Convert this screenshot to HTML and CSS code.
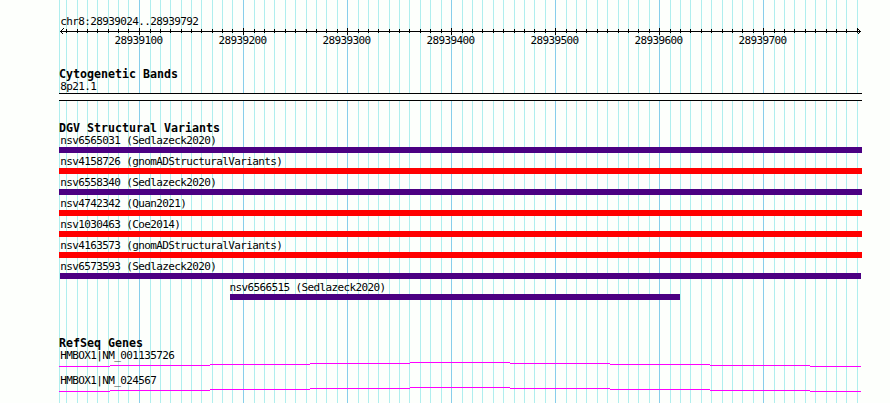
FILE: index.html
```html
<!DOCTYPE html>
<html lang="en">
<head>
<meta charset="utf-8">
<title>chr8:28939024..28939792</title>
<link rel="stylesheet" href="styles.css">
</head>
<body>
<svg class="grid" width="890" height="403" aria-hidden="true">
<path class="minor" d="M59 0v403M66 0v403M77 0v403M87 0v403M97 0v403M108 0v403M118 0v403M128 0v403M150 0v403M160 0v403M170 0v403M181 0v403M191 0v403M201 0v403M212 0v403M222 0v403M232 0v403M254 0v403M264 0v403M274 0v403M285 0v403M295 0v403M306 0v403M316 0v403M326 0v403M337 0v403M358 0v403M368 0v403M378 0v403M389 0v403M399 0v403M409 0v403M420 0v403M430 0v403M441 0v403M462 0v403M472 0v403M482 0v403M493 0v403M503 0v403M514 0v403M524 0v403M534 0v403M545 0v403M566 0v403M576 0v403M586 0v403M597 0v403M607 0v403M618 0v403M628 0v403M638 0v403M649 0v403M670 0v403M680 0v403M690 0v403M701 0v403M711 0v403M722 0v403M732 0v403M742 0v403M753 0v403M774 0v403M784 0v403M794 0v403M805 0v403M815 0v403M826 0v403M836 0v403M846 0v403M857 0v403" transform="translate(.5 0)"/>
<path class="major" d="M139 0v403M243 0v403M347 0v403M451 0v403M555 0v403M659 0v403M763 0v403" transform="translate(.5 0)"/>
</svg>
<main class="browser">
<section class="ruler">
<p class="label">chr8:28939024..28939792</p>
<svg class="axis" width="803" height="9" viewBox="59 27 803 9" aria-hidden="true">
<path d="M60 31.5H861"/>
<path transform="translate(.5 0)" d="M66 29v4M77 29v4M87 29v4M97 29v4M108 29v4M118 29v4M128 29v4M150 29v4M160 29v4M170 29v4M181 29v4M191 29v4M201 29v4M212 29v4M222 29v4M232 29v4M254 29v4M264 29v4M274 29v4M285 29v4M295 29v4M306 29v4M316 29v4M326 29v4M337 29v4M358 29v4M368 29v4M378 29v4M389 29v4M399 29v4M409 29v4M420 29v4M430 29v4M441 29v4M462 29v4M472 29v4M482 29v4M493 29v4M503 29v4M514 29v4M524 29v4M534 29v4M545 29v4M566 29v4M576 29v4M586 29v4M597 29v4M607 29v4M618 29v4M628 29v4M638 29v4M649 29v4M670 29v4M680 29v4M690 29v4M701 29v4M711 29v4M722 29v4M732 29v4M742 29v4M753 29v4M774 29v4M784 29v4M794 29v4M805 29v4M815 29v4M826 29v4M836 29v4M846 29v4M857 29v4M139 28v7M243 28v7M347 28v7M451 28v7M555 28v7M659 28v7M763 28v7"/>
<path d="M63.5 28.5l-3 3 3 3M857.500 28.500l3 3-3 3"/>
</svg>
<div class="ticks"><span>28939100</span><span>28939200</span><span>28939300</span><span>28939400</span><span>28939500</span><span>28939600</span><span>28939700</span></div>
</section>
<section class="cyto">
<h2>Cytogenetic Bands</h2>
<p class="label">8p21.1</p>
<div class="band"></div>
</section>
<section class="variants">
<h2>DGV Structural Variants</h2>
<div class="variant gain"><p class="label">nsv6565031 (Sedlazeck2020)</p></div>
<div class="variant loss"><p class="label">nsv4158726 (gnomADStructuralVariants)</p></div>
<div class="variant gain"><p class="label">nsv6558340 (Sedlazeck2020)</p></div>
<div class="variant loss"><p class="label">nsv4742342 (Quan2021)</p></div>
<div class="variant loss"><p class="label">nsv1030463 (Coe2014)</p></div>
<div class="variant loss"><p class="label">nsv4163573 (gnomADStructuralVariants)</p></div>
<div class="variant gain inset"><p class="label">nsv6573593 (Sedlazeck2020)</p></div>
<div class="variant gain partial"><p class="label">nsv6566515 (Sedlazeck2020)</p></div>
</section>
<section class="genes">
<h2>RefSeq Genes</h2>
<div class="gene"><p class="label">HMBOX1|NM_001135726</p>
<svg width="803" height="5" viewBox="59 0 803 5" aria-hidden="true"><path d="M59 4.500H110M110 3.500H210M210 2.500H310M310 1.500H410M410 .5H510M510 1.500H610M610 2.500H710M710 3.500H810M810 4.500H861"/></svg></div>
<div class="gene"><p class="label">HMBOX1|NM_024567</p>
<svg width="803" height="5" viewBox="59 0 803 5" aria-hidden="true"><path d="M59 4.500H110M110 3.500H210M210 2.500H310M310 1.500H410M410 .5H510M510 1.500H610M610 2.500H710M710 3.500H810M810 4.500H861"/></svg></div>
</section>
</main>
</body>
</html>
```
FILE: styles.css
```css
* { box-sizing: border-box; margin: 0; padding: 0; }
body {
  width: 890px;
  height: 403px;
  overflow: hidden;
  background: #fdfffc;
  color: #000;
  font-family: "DejaVu Sans Mono", monospace;
}
svg { display: block; fill: none; shape-rendering: crispEdges; }
.grid { position: absolute; top: 0; left: 0; z-index: -1; }
.minor { stroke: #afeeee; }
.major { stroke: #87ceeb; }
.browser { width: 803px; margin-left: 59px; padding-top: 15px; }
.label, .ticks {
  font-size: 11px;
  line-height: 14px;
  height: 12px;
  letter-spacing: -0.622px;
  white-space: nowrap;
}
.label { padding-left: 1.3px; }
h2 {
  font-size: 11.63px;
  line-height: 12px;
  height: 12px;
  font-weight: bold;
  white-space: nowrap;
}
.ruler { height: 53px; }
.axis { stroke: #000; }
.ticks { display: grid; grid-template-columns: repeat(7, 104px); padding-left: 55.4px; margin-top: -2px; }
.cyto { height: 54px; }
.band { margin-top: 1px; height: 8px; border: solid #000; border-width: 1px 0; background: #fdfffc; }
.variants { height: 215px; }
.variant { height: 21px; padding-top: 2px; border-bottom: 6px solid; }
h2 + .variant { height: 19px; padding-top: 0; }
.gain { border-color: #4b0082; }
.loss { border-color: #f00; }
.inset { margin: 0 1px; }
.inset .label { padding-left: 0.3px; }
.partial { margin-left: 171px; width: 450px; }
.partial .label { padding-left: 0; margin-left: -0.5px; }
.gene { height: 25px; }
.gene svg { stroke: #f0f; margin-top: 1px; }
```
